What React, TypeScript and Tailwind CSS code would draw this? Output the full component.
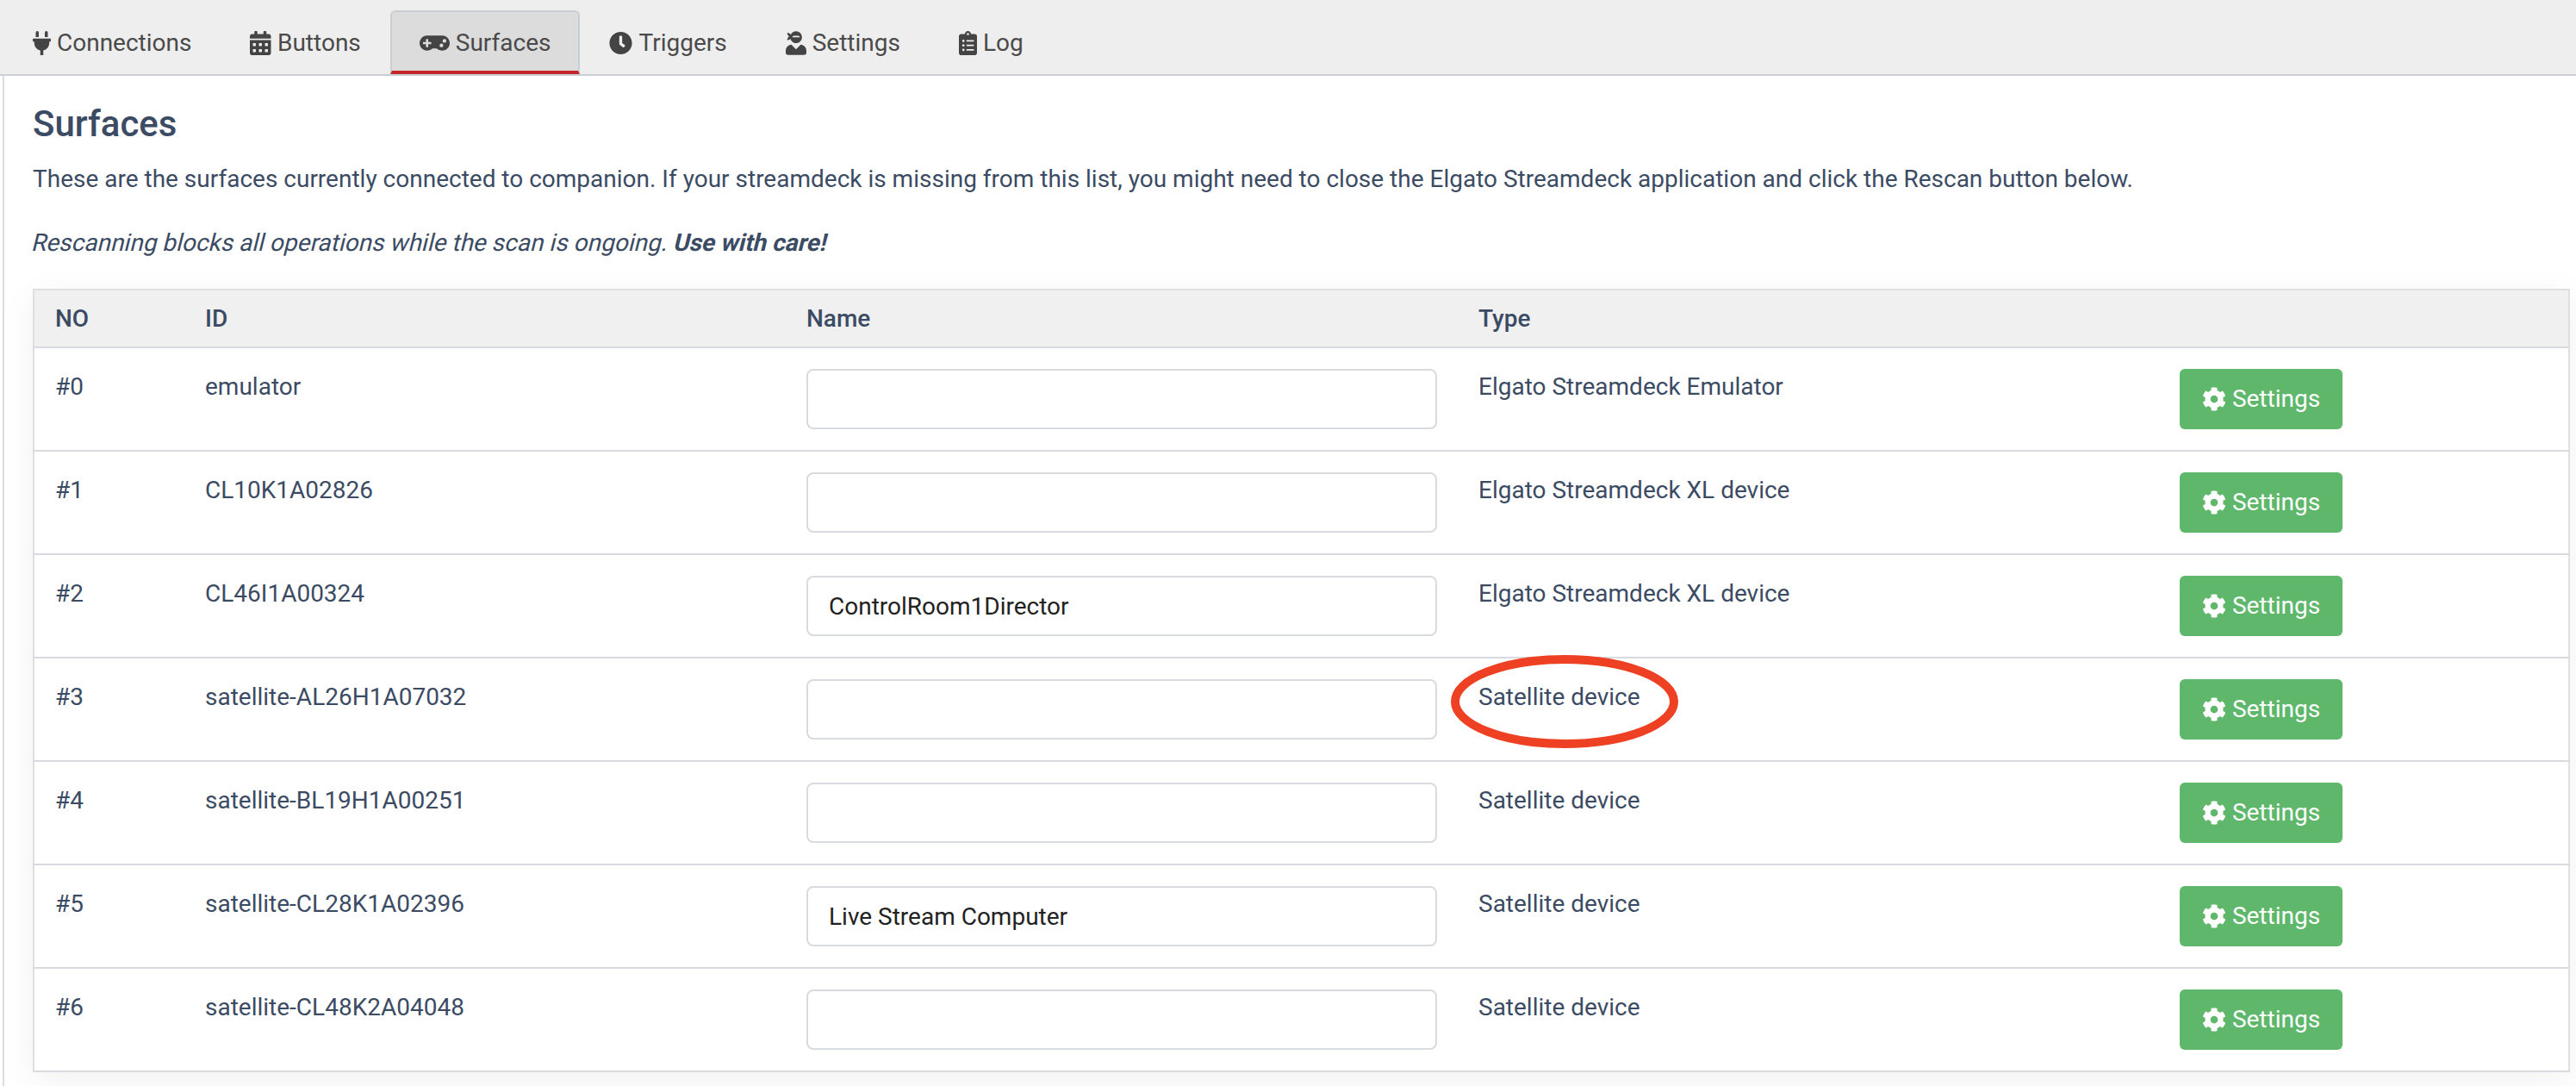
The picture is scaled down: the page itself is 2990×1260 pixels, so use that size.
import type { ComponentType } from 'react';
import { FaCalendarAlt, FaClipboardList, FaClock, FaCog, FaGamepad, FaPlug, FaUserNinja } from 'react-icons/fa';

interface Tab {
  label: string;
  icon: ComponentType<{ className?: string }>;
  iconClass: string;
  active?: boolean;
}

// react-icons squeezes every glyph into a 1em box, so the real aspect ratio is set per icon
const tabs: Tab[] = [
  { label: 'Connections', icon: FaPlug, iconClass: 'h-[28px] w-[21px]' },
  { label: 'Buttons', icon: FaCalendarAlt, iconClass: 'h-[28px] w-[24.5px]' },
  { label: 'Surfaces', icon: FaGamepad, iconClass: 'h-[28px] w-[35px]', active: true },
  { label: 'Triggers', icon: FaClock, iconClass: 'h-[28px] w-[27px]' },
  { label: 'Settings', icon: FaUserNinja, iconClass: 'h-[28px] w-[24px]' },
  { label: 'Log', icon: FaClipboardList, iconClass: 'h-[28px] w-[21px]' },
];

const surfaces = [
  { no: '#0', id: 'emulator', name: '', type: 'Elgato Streamdeck Emulator' },
  { no: '#1', id: 'CL10K1A02826', name: '', type: 'Elgato Streamdeck XL device' },
  { no: '#2', id: 'CL46I1A00324', name: 'ControlRoom1Director', type: 'Elgato Streamdeck XL device' },
  { no: '#3', id: 'satellite-AL26H1A07032', name: '', type: 'Satellite device', circled: true },
  { no: '#4', id: 'satellite-BL19H1A00251', name: '', type: 'Satellite device' },
  { no: '#5', id: 'satellite-CL28K1A02396', name: 'Live Stream Computer', type: 'Satellite device' },
  { no: '#6', id: 'satellite-CL48K2A04048', name: '', type: 'Satellite device' },
];

export default function App() {
  return (
    <div className="h-[1260px] w-[2990px] overflow-hidden bg-white font-['Roboto',sans-serif] text-[28px] leading-[42px] text-[#3c4b64]">
      <nav className="flex h-[88px] items-end border-b-2 border-[#c8ced3] bg-[#eeeeee] pl-[4px] pt-[12px]">
        {tabs.map((tab) => {
          const Icon = tab.icon;
          return (
            <div
              key={tab.label}
              className={[
                'flex h-[74px] items-center gap-[7px] rounded-t-[6px] border-2 border-b-4 px-[32px] pt-[3px]',
                tab.active ? 'border-[#c8ced3] border-b-[#c4262a] bg-[#dcdcdc]' : 'border-transparent',
              ].join(' ')}
            >
              <Icon className={`${tab.iconClass} text-[#444444]`} />
              <span className="text-[#4a4a4a]">{tab.label}</span>
            </div>
          );
        })}
      </nav>

      <main className="ml-[3px] h-[1172px] border-l-2 border-[#d8dbe0] pl-[33px] pr-[8px] pt-[32px]">
        <h1 className="text-[42px] font-medium leading-[48px]">Surfaces</h1>
        <p className="mt-[19px]">
          These are the surfaces currently connected to companion. If your streamdeck is missing from this list, you
          might need to close the Elgato Streamdeck application and click the Rescan button below.
        </p>
        <p className="mt-[32px]">
          <span className="inline-block origin-left -skew-x-[14deg]">
            Rescanning blocks all operations while the scan is ongoing. <strong>Use with care!</strong>
          </span>
        </p>

        <table className="mt-[32px] w-[2943px] table-fixed border-collapse border-2 border-[#dfdfe2] shadow-[0_10px_40px_rgba(0,0,0,0.06)]">
          <colgroup>
            <col className="w-[175px]" />
            <col className="w-[698px]" />
            <col className="w-[780px]" />
            <col className="w-[814px]" />
            <col className="w-[476px]" />
          </colgroup>
          <thead>
            <tr className="h-[67px] border-b-2 border-[#d8dbe0] bg-[#f0f0f0] text-left">
              <th className="pl-[24px] font-medium">NO</th>
              <th className="pl-[24px] font-medium">ID</th>
              <th className="pl-[24px] font-medium">Name</th>
              <th className="pl-[24px] font-medium">Type</th>
              <th />
            </tr>
          </thead>
          <tbody>
            {surfaces.map((surface) => (
              <tr key={surface.no} className="h-[120px] border-b-2 border-[#d8dbe0] align-top">
                <td className="px-[24px] py-[24px]">{surface.no}</td>
                <td className="px-[24px] py-[24px]">{surface.id}</td>
                <td className="px-[24px] py-[24px]">
                  <input
                    readOnly
                    value={surface.name}
                    className="block h-[70px] w-[732px] rounded-[8px] border-2 border-[#d8dbe0] bg-white px-[24px] text-[#222222]"
                  />
                </td>
                <td className="relative px-[24px] py-[24px]">
                  {surface.type}
                  {surface.circled && (
                    <svg className="absolute left-[-9px] top-[-5px]" width="266" height="110" viewBox="0 0 266 110" fill="none">
                      <ellipse cx="133" cy="55" rx="127" ry="49" stroke="#ee4023" strokeWidth="10" />
                    </svg>
                  )}
                </td>
                <td className="px-[24px] py-[24px]">
                  <button
                    type="button"
                    className="flex h-[70px] w-[189px] items-center justify-center gap-[7px] rounded-[6px] bg-[#5eb76a] text-white"
                  >
                    <FaCog className="text-[28px]" />
                    Settings
                  </button>
                </td>
              </tr>
            ))}
          </tbody>
        </table>
      </main>
    </div>
  );
}
